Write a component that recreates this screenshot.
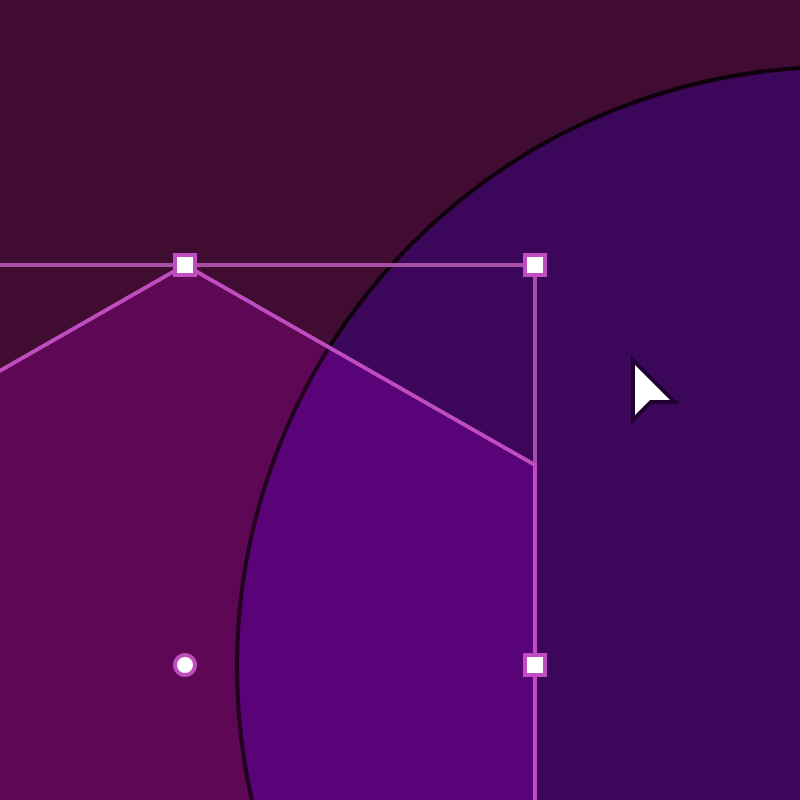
const boxHandles = [
  { x: 185, y: 265 },
  { x: 535, y: 265 },
  { x: 535, y: 665 },
];

export default function App() {
  return (
    <main className="h-screen w-full overflow-hidden bg-[#400c32]">
      <svg
        className="block h-full w-full"
        viewBox="0 0 800 800"
        preserveAspectRatio="xMidYMid slice"
        role="img"
        aria-label="Selected hexagon overlapping a circle"
      >
        <defs>
          <clipPath id="hexagon">
            <polygon points="185,265 535,465 535,865 185,1065 -165,865 -165,465" />
          </clipPath>
        </defs>

        {/* Circle beneath the selected shape */}
        <circle cx="837" cy="667" r="600" fill="#3c075a" stroke="#10020d" strokeWidth="4" />

        {/* Hexagon and the part of the circle it covers */}
        <g clipPath="url(#hexagon)">
          <rect x="-165" y="265" width="700" height="800" fill="#5e0855" />
          <circle cx="837" cy="667" r="600" fill="#5a0277" stroke="#21021f" strokeWidth="4" />
        </g>

        {/* Selection bounds and outline */}
        <rect x="-165" y="265" width="700" height="800" fill="none" stroke="#a650a5" strokeWidth="4" />
        <polygon
          points="185,265 535,465 535,865 185,1065 -165,865 -165,465"
          fill="none"
          stroke="#c04dc0"
          strokeWidth="4"
        />

        {boxHandles.map(({ x, y }) => (
          <rect
            key={`${x}-${y}`}
            x={x - 10}
            y={y - 10}
            width="20"
            height="20"
            fill="#fff"
            stroke="#c04dc0"
            strokeWidth="4"
          />
        ))}
        <circle cx="185" cy="665" r="10" fill="#fff" stroke="#c04dc0" strokeWidth="4" />

        {/* Pointer */}
        <path
          d="M635 365V415L650 400H670Z"
          fill="#fff"
          stroke="#1f0230"
          strokeWidth="8"
          paintOrder="stroke"
        />
      </svg>
    </main>
  );
}
